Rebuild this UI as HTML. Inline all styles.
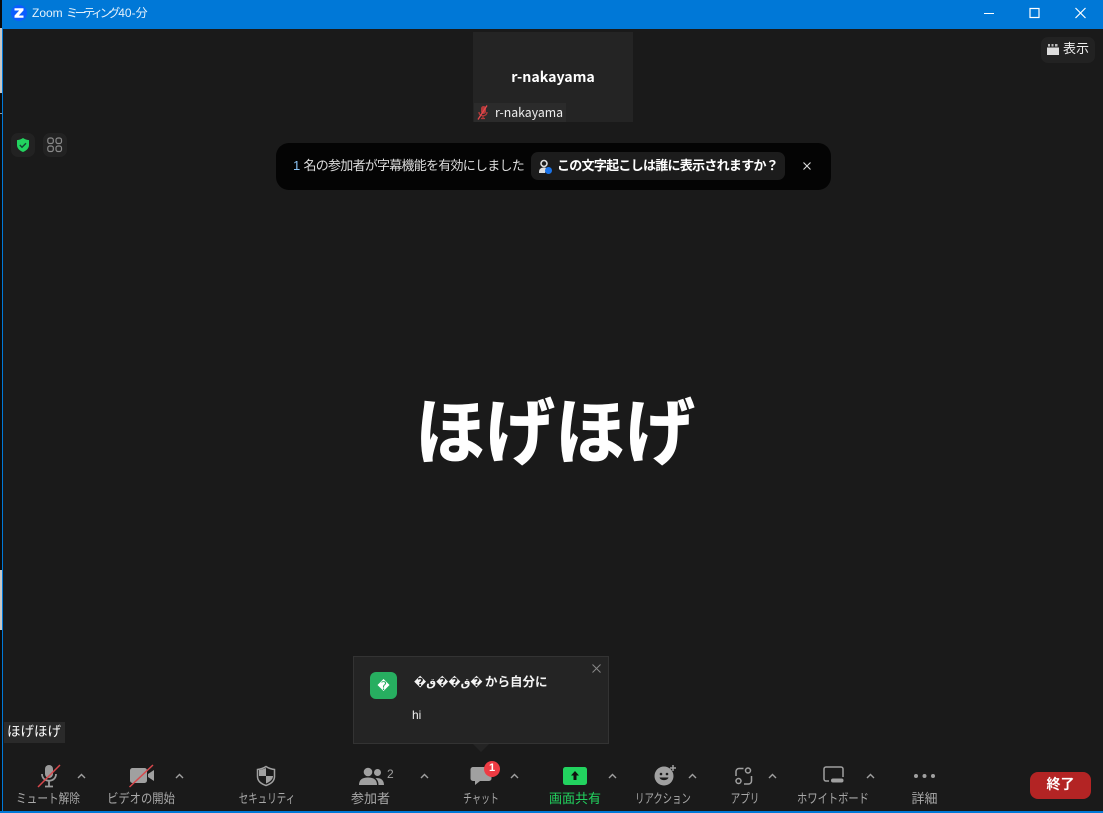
<!DOCTYPE html>
<html lang="ja"><head><meta charset="utf-8"><title>Zoom</title>
<style>
html,body{margin:0;padding:0;background:#1a1a1a}
#r{position:relative;width:1103px;height:813px;overflow:hidden;background:#1a1a1a;font-family:"Liberation Sans","Noto Sans CJK JP",sans-serif;color:#fff}
#r>*{position:absolute}
.t{white-space:nowrap;line-height:1}
.l{font-size:13px;color:#a8a8a8;text-align:center;top:792px;white-space:nowrap;line-height:14px;transform:translateX(-50%) scaleX(var(--k,1))}
.c{top:773px;width:9px;height:6px}
</style></head><body><div id="r">
<div style="left:0;top:0;width:3px;height:813px;background:#0a0a0a"></div>
<div style="left:0;top:28px;width:2px;height:65px;background:#c8c8c8"></div>
<div style="left:0;top:113px;width:2px;height:1px;background:#999"></div>
<div style="left:0;top:570px;width:2px;height:60px;background:#c8c8c8"></div>
<div style="left:2px;top:0;width:1px;height:813px;background:#0078d7"></div>
<div style="left:0;top:811px;width:1103px;height:2px;background:#0078d7"></div>
<div style="left:2px;top:0;width:1101px;height:29px;background:#0078d7"></div>

<svg style="left:11px;top:5px" width="16" height="16" viewBox="0 0 16 16"><circle cx="8" cy="8" r="8" fill="#0b5cff"/><path d="M3.500 3.200h9v2.200L7.800 10.500h4.700v2.300h-9v-2.200l4.700-5.100H3.500z" fill="#fff"/></svg>
<div class="t" style="left:32px;top:7px;font-size:12px;color:#e4f1fb">Zoom <span style="letter-spacing:-3.4px">ミーティング</span> <span style="margin-left:-2px">40-分</span></div>

<svg style="left:980px;top:5px" width="120" height="18" viewBox="0 0 120 18" fill="none" stroke="#fff" stroke-width="1"><path d="M4 8.500h10"/><rect x="50" y="3.500" width="9" height="9" stroke-width="1.200"/><path d="M95.500 3l10 10M105.500 3l-10 10" stroke-width="1.200"/></svg>

<div style="left:1041px;top:37px;width:54px;height:26px;border-radius:7px;background:#222"></div>
<svg style="left:1047px;top:43px" width="12" height="12" viewBox="0 0 12 12"><path d="M0 4.500h12V12H0z" fill="#ddd"/><path d="M1 1h2v2.500H1zM4.500 1h2v2.500h-2zM8 1h2.500v2.500H8z" fill="#bbb"/></svg>
<div class="t" style="left:1063px;top:42px;font-size:13px;color:#eee">表示</div>

<div style="left:473px;top:32px;width:160px;height:90px;background:#242424"></div>
<div class="t" style="left:473px;top:70px;width:160px;text-align:center;font-weight:700;color:#fff;font-family:'Noto Sans CJK JP',sans-serif;font-size:14.200px">r-nakayama</div>
<div style="left:474px;top:103px;width:92px;height:19px;background:#2b2b2b"></div>
<svg style="left:477px;top:105px" width="12" height="15" viewBox="0 0 12 15"><rect x="4" y="1" width="5" height="8" rx="2.500" fill="#b23a3a"/><path d="M2 7c0 5 8 5 8 0M6 11v2M4 13.500h4" fill="none" stroke="#b23a3a" stroke-width="1.300"/><path d="M1 14.500L10 .5" stroke="#e5484d" stroke-width="1.300"/></svg>
<div class="t" style="left:495px;top:106px;color:#eee;font-family:'Noto Sans CJK JP',sans-serif;font-size:12.300px">r-nakayama</div>

<svg style="left:11px;top:133px" width="24" height="24" viewBox="0 0 24 24"><rect width="24" height="24" rx="7" fill="#222"/><path d="M12 5c2 1.300 3.800 1.900 6 2.100V12c0 3.500-2.800 5.800-6 7-3.200-1.200-6-3.500-6-7V7.100C8.200 6.900 10 6.300 12 5z" fill="#22d35f"/><path d="M8.800 12l2.200 2.200 4-4" fill="none" stroke="#143" stroke-width="1.400"/></svg>
<svg style="left:43px;top:133px" width="24" height="24" viewBox="0 0 24 24"><rect width="24" height="24" rx="7" fill="#222"/><g fill="none" stroke="#8a8a8a" stroke-width="1.200"><rect x="4.800" y="5" width="5.500" height="5.500" rx="2"/><rect x="13" y="5" width="5.500" height="5.500" rx="2"/><rect x="4.800" y="13" width="5.500" height="5.500" rx="2"/><rect x="13" y="13" width="5.500" height="5.500" rx="2"/></g></svg>

<div style="left:276px;top:143px;width:555px;height:47px;border-radius:13px;background:#040404"></div>
<div class="t" style="left:293px;top:159px;font-size:13px;color:#ddd;letter-spacing:-.75px"><span style="color:#8cc4f5">1</span><span style="margin-left:4px">名の参加者が字幕機能を有効にしました</span></div>
<div style="left:531px;top:152px;width:254px;height:28px;border-radius:7px;background:#1c1c1c"></div>
<svg style="left:538px;top:159px" width="16" height="16" viewBox="0 0 16 16"><circle cx="6" cy="4.500" r="3" fill="none" stroke="#ddd" stroke-width="1.600"/><path d="M1 13c0-3 2-4.500 5-4.500 1 0 2 .2 2.600.6L7 14H1z" fill="#ddd"/><circle cx="10.500" cy="11.500" r="3.500" fill="#1a73e8"/></svg>
<div class="t" style="left:557px;top:159px;font-size:13px;font-weight:700;color:#fff;letter-spacing:-.72px">この文字起こしは誰に表示されますか？</div>
<svg style="left:803px;top:162px" width="8" height="8" viewBox="0 0 8 8"><path d="M.5.500l7 7M7.500.500l-7 7" stroke="#ddd" stroke-width="1.100"/></svg>

<div class="t" style="left:415px;top:378px;font-size:70px;line-height:100px;font-weight:700;color:#fff;font-family:'Noto Sans CJK JP',sans-serif;transform:scaleY(1.03);-webkit-text-stroke:.8px #fff">ほげほげ</div>

<div style="left:4px;top:722px;width:61px;height:21px;background:#2a2a2a"></div>
<div class="t" style="left:7px;top:725px;font-size:13.500px;color:#fff">ほげほげ</div>

<div style="left:353px;top:656px;width:254px;height:86px;background:#242424;border:1px solid #333"></div>
<div style="left:473px;top:744px;width:0;height:0;border-left:8px solid transparent;border-right:8px solid transparent;border-top:8px solid #242424"></div>
<svg style="left:592px;top:664px" width="9" height="9" viewBox="0 0 9 9"><path d="M.5.500l8 8M8.500.500l-8 8" stroke="#888" stroke-width="1"/></svg>
<div style="left:370px;top:672px;width:27px;height:27px;border-radius:6px;background:#27ae60"></div>
<div class="t" style="left:370px;top:680px;width:27px;text-align:center;font-size:12px;color:#fff;font-family:'DejaVu Sans',sans-serif">�</div>
<div class="t" style="left:414px;top:674px;font-size:12.500px;font-weight:700;color:#f4f4f4;font-family:'DejaVu Sans','Noto Sans CJK JP',sans-serif;line-height:15px"><span style="font-size:11px;margin-right:-2px">�ق��ق�</span> から自分に</div>
<div class="t" style="left:412px;top:709px;font-size:12px;color:#eee">hi</div>

<svg style="left:36px;top:762px" width="28" height="28" viewBox="0 0 28 28"><rect x="9" y="3" width="8" height="13" rx="4" fill="#9a9a9a"/><path d="M6 12c0 9 14 9 14 0M13 19v5M9 24.500h8" fill="none" stroke="#9a9a9a" stroke-width="1.800"/><path d="M2 25L24 3" stroke="#d8474b" stroke-width="1.500"/></svg>
<div class="l" style="left:48px;--k:.82">ミュート解除</div>
<svg class="c" style="left:77px" viewBox="0 0 9 6"><path d="M1 5l3.500-3.500L8 5" fill="none" stroke="#a0a0a0" stroke-width="1.400"/></svg>

<svg style="left:128px;top:764px" width="28" height="24" viewBox="0 0 28 24"><rect x="2" y="4" width="17" height="15" rx="2.500" fill="#a0a0a0"/><path d="M20 10l6-4v11l-6-4z" fill="#a0a0a0"/><path d="M1.500 23L25 1" stroke="#d8474b" stroke-width="1.500"/></svg>
<div class="l" style="left:141px;--k:.87">ビデオの開始</div>
<svg class="c" style="left:175px" viewBox="0 0 9 6"><path d="M1 5l3.500-3.500L8 5" fill="none" stroke="#a0a0a0" stroke-width="1.400"/></svg>

<svg style="left:256px;top:765px" width="20" height="22" viewBox="0 0 20 22"><path d="M10 1.500c3 2 5.500 2.700 8.500 3v7c0 4.500-4 7.500-8.500 9-4.500-1.500-8.500-4.500-8.500-9v-7c3-.3 5.500-1 8.500-3z" fill="#1a1a1a" stroke="#a0a0a0" stroke-width="1.500"/><path d="M10 3v8H3V5c2.800-.3 4.700-1 7-2zM10 11h7c0 3.600-3.500 6-7 7.500z" fill="#a0a0a0"/></svg>
<div class="l" style="left:266.500px;--k:.73">セキュリティ</div>

<svg style="left:359px;top:767px" width="26" height="19" viewBox="0 0 26 19"><circle cx="9" cy="5" r="4.300" fill="#a0a0a0"/><circle cx="18.500" cy="5.500" r="3.500" fill="#a0a0a0"/><path d="M0 18c0-5 3-7.500 9-7.500s9 2.500 9 7.500z" fill="#a0a0a0"/><path d="M19.500 18c0-3-1-5.200-3-6.700 5-1 8.500 1.700 8.500 6.700z" fill="#a0a0a0"/></svg>
<div class="t" style="left:387px;top:768px;font-size:12px;color:#a0a0a0">2</div>
<div class="l" style="left:370.500px">参加者</div>
<svg class="c" style="left:420px" viewBox="0 0 9 6"><path d="M1 5l3.500-3.500L8 5" fill="none" stroke="#a0a0a0" stroke-width="1.400"/></svg>

<svg style="left:470px;top:766px" width="22" height="20" viewBox="0 0 22 20"><path d="M3 1h16a2.500 2.500 0 0 1 2.500 2.500v9A2.500 2.500 0 0 1 19 15h-9l-5 4v-4H3A2.500 2.500 0 0 1 .5 12.500v-9A2.500 2.500 0 0 1 3 1z" fill="#a0a0a0"/></svg>
<div style="left:484px;top:761px;width:16px;height:16px;border-radius:50%;background:#ee3b43"></div>
<div class="t" style="left:484px;top:763px;width:16px;text-align:center;font-size:11px;font-weight:700;color:#fff">1</div>
<div class="l" style="left:481px;--k:.69">チャット</div>
<svg class="c" style="left:510px" viewBox="0 0 9 6"><path d="M1 5l3.500-3.500L8 5" fill="none" stroke="#a0a0a0" stroke-width="1.400"/></svg>

<svg style="left:563px;top:767px" width="24" height="18" viewBox="0 0 24 18"><rect width="24" height="18" rx="2.500" fill="#22d35f"/><path d="M12 4l4 4.500h-2.500V13h-3V8.500H8z" fill="#111"/></svg>
<div class="l" style="left:575px;color:#22d35f">画面共有</div>
<svg class="c" style="left:608px" viewBox="0 0 9 6"><path d="M1 5l3.500-3.500L8 5" fill="none" stroke="#a0a0a0" stroke-width="1.400"/></svg>

<svg style="left:654px;top:764px" width="24" height="22" viewBox="0 0 24 22"><circle cx="10" cy="12" r="9.500" fill="#a0a0a0"/><circle cx="7" cy="10" r="1.300" fill="#1a1a1a"/><circle cx="13" cy="10" r="1.300" fill="#1a1a1a"/><path d="M5.500 13.500c1 3.500 8 3.500 9 0z" fill="#1a1a1a"/><path d="M19 1v6M16 4h6" stroke="#a0a0a0" stroke-width="1.500"/></svg>
<div class="l" style="left:663px;--k:.72">リアクション</div>
<svg class="c" style="left:688px" viewBox="0 0 9 6"><path d="M1 5l3.500-3.500L8 5" fill="none" stroke="#a0a0a0" stroke-width="1.400"/></svg>

<svg style="left:735px;top:767px" width="18" height="18" viewBox="0 0 18 18" fill="none" stroke="#a0a0a0" stroke-width="1.500"><circle cx="13" cy="3.500" r="2.500"/><circle cx="3.500" cy="14" r="2.500"/><path d="M8.500 1.500H4a3 3 0 0 0-3 3V9M16.500 9v5a3 3 0 0 1-3 3H9"/></svg>
<div class="l" style="left:744.500px;--k:.74">アプリ</div>
<svg class="c" style="left:768px" viewBox="0 0 9 6"><path d="M1 5l3.500-3.500L8 5" fill="none" stroke="#a0a0a0" stroke-width="1.400"/></svg>

<svg style="left:823px;top:766px" width="21" height="18" viewBox="0 0 21 18"><path d="M6 15H3a2 2 0 0 1-2-2V3a2 2 0 0 1 2-2h15a2 2 0 0 1 2 2v8" fill="none" stroke="#a0a0a0" stroke-width="1.500"/><rect x="8" y="12.500" width="12.500" height="4" rx="2" fill="#a0a0a0"/></svg>
<div class="l" style="left:833px;--k:.79">ホワイトボード</div>
<svg class="c" style="left:866px" viewBox="0 0 9 6"><path d="M1 5l3.500-3.500L8 5" fill="none" stroke="#a0a0a0" stroke-width="1.400"/></svg>

<svg style="left:913px;top:773px" width="23" height="6" viewBox="0 0 23 6" fill="#a0a0a0"><circle cx="3" cy="3" r="2"/><circle cx="11.500" cy="3" r="2"/><circle cx="20" cy="3" r="2"/></svg>
<div class="l" style="left:924.500px">詳細</div>

<div style="left:1030px;top:772px;width:61px;height:27px;border-radius:8px;background:#b32424"></div>
<div class="t" style="left:1030px;top:777px;width:61px;text-align:center;font-size:14px;font-weight:700;color:#fff">終了</div>
</div></body></html>
